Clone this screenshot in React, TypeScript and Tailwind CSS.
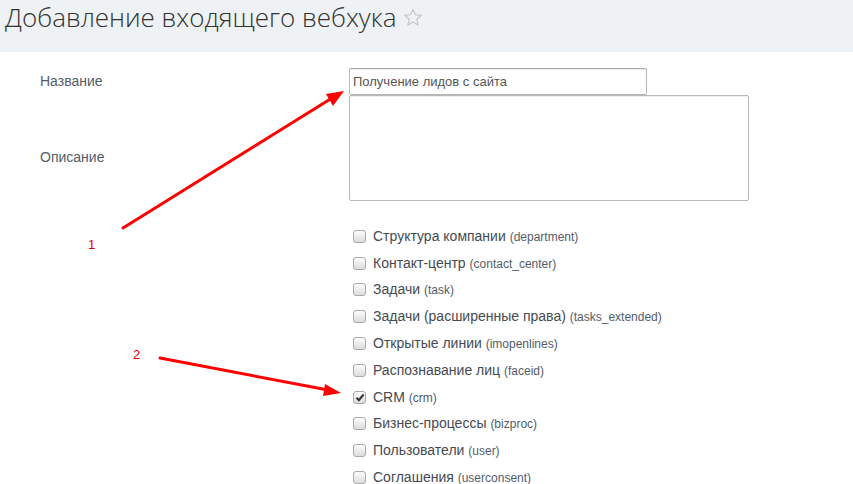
import React from "react";

const items: { name: string; code: string; checked?: boolean }[] = [
  { name: "Структура компании", code: "(department)" },
  { name: "Контакт-центр", code: "(contact_center)" },
  { name: "Задачи", code: "(task)" },
  { name: "Задачи (расширенные права)", code: "(tasks_extended)" },
  { name: "Открытые линии", code: "(imopenlines)" },
  { name: "Распознавание лиц", code: "(faceid)" },
  { name: "CRM", code: "(crm)", checked: true },
  { name: "Бизнес-процессы", code: "(bizproc)" },
  { name: "Пользователи", code: "(user)" },
  { name: "Соглашения", code: "(userconsent)" },
];

function Box({ checked }: { checked?: boolean }) {
  return (
    <div className="w-[13px] h-[13px] rounded-[3px] border border-[#a9a9a9] bg-gradient-to-b from-[#fdfdfd] to-[#dcdcdc] flex items-center justify-center shrink-0">
      {checked && (
        <svg width="10" height="9" viewBox="0 0 10 9">
          <path d="M1.5 4.8 L3.8 7.2 L8.6 1.5" stroke="#333" strokeWidth="2" fill="none" />
        </svg>
      )}
    </div>
  );
}

export default function App() {
  return (
    <div className="relative w-[853px] h-[484px] overflow-hidden bg-white" style={{ fontFamily: '"Liberation Sans", Arial, sans-serif' }}>
      <div className="h-[52px] bg-[#eef2f4] flex items-start pl-[5px]">
        <h1 className="text-[26px] leading-[34px] font-light text-[#333] whitespace-nowrap" style={{ fontFamily: '"Open Sans", sans-serif' }}>
          Добавление входящего вебхука
        </h1>
        <svg className="ml-[6px] mt-[8px]" width="20" height="19" viewBox="0 0 24 23">
          <path d="M12 1.5 L14.9 8.2 L22.2 8.8 L16.6 13.6 L18.3 20.7 L12 16.9 L5.7 20.7 L7.4 13.6 L1.8 8.8 L9.1 8.2 Z" fill="none" stroke="#bfc3c8" strokeWidth="1.3" strokeLinejoin="round" />
        </svg>
      </div>

      <div className="flex mt-[16px]">
        <div className="w-[349px] pl-[40px] text-[14px] text-[#535c69]">
          <div className="h-[27px] leading-[27px]">Название</div>
          <div className="pt-[52px] leading-[20px]">Описание</div>
        </div>
        <div className="flex flex-col">
          <div className="w-[298px] h-[27px] border border-[#b7b7b7] border-t-[#a9a9a9] shadow-[inset_0_1px_1px_rgba(0,0,0,0.08)] rounded-[2px] pl-[3px] text-[13px] text-[#555] leading-[25px] bg-white">
            Получение лидов с сайта
          </div>
          <div className="w-[400px] h-[106px] border border-[#b7b7b7] rounded-[2px] bg-white shadow-[inset_0_1px_1px_rgba(0,0,0,0.06)]" />
        </div>
      </div>

      <div className="flex flex-col mt-[22px] pl-[353px]">
        {items.map((it) => (
          <div key={it.code} className="h-[26.8px] flex items-center gap-[7px]">
            <Box checked={it.checked} />
            <span className="text-[14px] text-[#454a52] whitespace-nowrap">
              {it.name} <span className="text-[12px] text-[#535c69]">{it.code}</span>
            </span>
          </div>
        ))}
      </div>

      <svg className="absolute left-0 top-0 pointer-events-none" width="853" height="484">
        <line x1="123" y1="228" x2="332" y2="98" stroke="#ff0000" strokeWidth="3" strokeLinecap="round" />
        <polygon points="344,91 326,94 333,106" fill="#ff0000" />
        <line x1="160" y1="358" x2="328" y2="390" stroke="#ff0000" strokeWidth="3" strokeLinecap="round" />
        <polygon points="341,393 325,384 323,396" fill="#ff0000" />
        <text x="88" y="249" fill="#e00000" fontSize="13" fontFamily="Liberation Sans, Arial, sans-serif">1</text>
        <text x="133" y="359" fill="#e00000" fontSize="13" fontFamily="Liberation Sans, Arial, sans-serif">2</text>
      </svg>
    </div>
  );
}
